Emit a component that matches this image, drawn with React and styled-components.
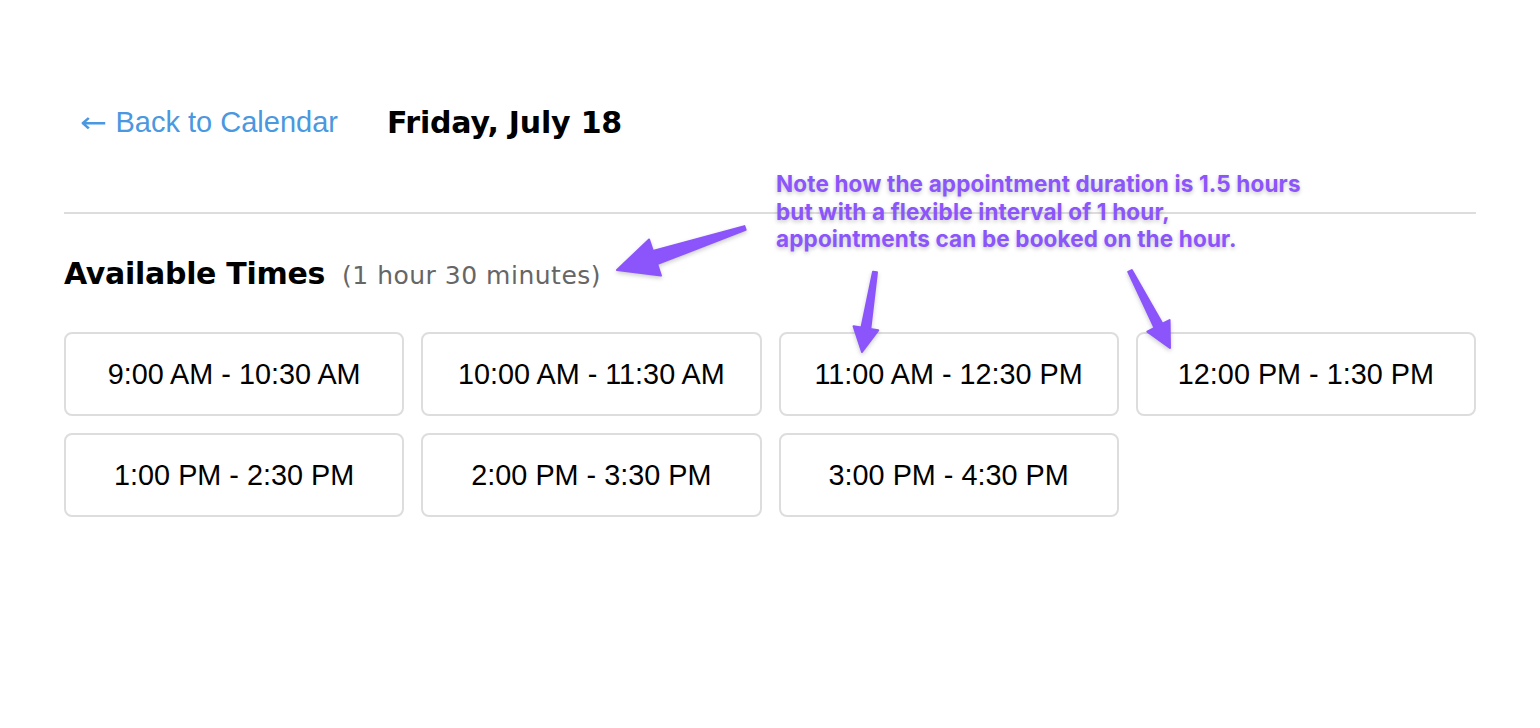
import styled, { createGlobalStyle } from "styled-components";

const GlobalStyle = createGlobalStyle`
  body {
    margin: 0;
    background: #fff;
    font-family: "Liberation Sans", Arial, sans-serif;
  }
`;

const Page = styled.div`
  position: relative;
  width: 1540px;
  height: 728px;
  padding: 96px 64px 0;
  box-sizing: border-box;
`;

const Header = styled.div`
  display: flex;
  align-items: center;
  gap: 49px;
  height: 52px;
  padding-left: 16px;
`;

const BackLink = styled.a`
  display: flex;
  align-items: center;
  gap: 12px;
  color: #4a98e0;
  font-size: 29px;
  text-decoration: none;
  cursor: pointer;
`;

const BackArrow = styled.span`
  font-family: "DejaVu Sans", sans-serif;
  font-size: 28px;
  transform: scaleX(1.15);
  transform-origin: left center;
`;

const DayTitle = styled.h2`
  margin: 0;
  font-family: "DejaVu Sans", sans-serif;
  font-weight: 700;
  font-size: 30px;
  letter-spacing: -0.2px;
  color: #000;
`;

const Divider = styled.div`
  height: 2px;
  background: #dddddd;
  margin-top: 64px;
`;

const SectionTitle = styled.div`
  display: flex;
  align-items: baseline;
  gap: 17px;
  margin-top: 42px;
  height: 40px;
`;

const SectionHeading = styled.h3`
  margin: 0;
  font-family: "DejaVu Sans", sans-serif;
  font-weight: 700;
  font-size: 30px;
  letter-spacing: -0.3px;
  color: #000;
`;

const Duration = styled.span`
  font-family: "DejaVu Sans", sans-serif;
  font-size: 25px;
  letter-spacing: 0.5px;
  color: #666;
`;

const SlotGrid = styled.div`
  display: grid;
  grid-template-columns: repeat(4, 1fr);
  gap: 17px;
  margin-top: 36px;
`;

const Slot = styled.button`
  height: 84px;
  border: 2px solid #dddddd;
  border-radius: 8px;
  background: #fff;
  font-family: "Liberation Sans", Arial, sans-serif;
  font-size: 28.8px;
  color: #000;
  cursor: pointer;
`;

const Note = styled.div`
  position: absolute;
  left: 776px;
  top: 170px;
  font-family: Inter, "Noto Sans", sans-serif;
  font-weight: 700;
  font-size: 22.5px;
  line-height: 27.5px;
  letter-spacing: 0.15px;
  color: #8b55fb;
  text-shadow: 0 2px 4px rgba(0, 0, 0, 0.22);
`;

const ArrowLayer = styled.svg`
  position: absolute;
  left: 0;
  top: 0;
  width: 1540px;
  height: 728px;
  pointer-events: none;
  filter: drop-shadow(0 2px 2px rgba(0, 0, 0, 0.2));
`;

const slots = [
  "9:00 AM - 10:30 AM",
  "10:00 AM - 11:30 AM",
  "11:00 AM - 12:30 PM",
  "12:00 PM - 1:30 PM",
  "1:00 PM - 2:30 PM",
  "2:00 PM - 3:30 PM",
  "3:00 PM - 4:30 PM",
];

// builds a tapered arrow polygon from tail to tip
const arrowPoints = (tail, tip, headLen, headW, tailW, neckW) => {
  const dx = tip[0] - tail[0];
  const dy = tip[1] - tail[1];
  const len = Math.hypot(dx, dy);
  const ux = dx / len;
  const uy = dy / len;
  const nx = -uy;
  const ny = ux;
  const bx = tip[0] - ux * headLen;
  const by = tip[1] - uy * headLen;
  const pts = [
    [tail[0] + nx * tailW / 2, tail[1] + ny * tailW / 2],
    [bx + nx * neckW / 2, by + ny * neckW / 2],
    [bx + nx * headW / 2, by + ny * headW / 2],
    tip,
    [bx - nx * headW / 2, by - ny * headW / 2],
    [bx - nx * neckW / 2, by - ny * neckW / 2],
    [tail[0] - nx * tailW / 2, tail[1] - ny * tailW / 2],
  ];
  return pts.map((p) => p.join(",")).join(" ");
};

const arrows = [
  { tail: [745, 228], tip: [617, 270], headLen: 40, headW: 38, tailW: 4, neckW: 14 },
  { tail: [875, 272], tip: [862, 352], headLen: 24, headW: 25, tailW: 4, neckW: 9 },
  { tail: [1130, 271], tip: [1170, 348], headLen: 25, headW: 25, tailW: 4, neckW: 9 },
];

const App = () => {
  return (
    <>
      <GlobalStyle />
      <Page>
        <Header>
          <BackLink>
            <BackArrow>←</BackArrow>
            Back to Calendar
          </BackLink>
          <DayTitle>Friday, July 18</DayTitle>
        </Header>
        <Divider />
        <SectionTitle>
          <SectionHeading>Available Times</SectionHeading>
          <Duration>(1 hour 30 minutes)</Duration>
        </SectionTitle>
        <SlotGrid>
          {slots.map((s) => (
            <Slot key={s}>{s}</Slot>
          ))}
        </SlotGrid>
        <Note>
          Note how the appointment duration is 1.5 hours
          <br />
          but with a flexible interval of 1 hour,
          <br />
          appointments can be booked on the hour.
        </Note>
        <ArrowLayer viewBox="0 0 1540 728">
          {arrows.map((a, i) => (
            <polygon
              key={i}
              points={arrowPoints(a.tail, a.tip, a.headLen, a.headW, a.tailW, a.neckW)}
              fill="#8b55fb"
              stroke="#8b55fb"
              strokeWidth="2"
              strokeLinejoin="round"
            />
          ))}
        </ArrowLayer>
      </Page>
    </>
  );
};

export default App;
